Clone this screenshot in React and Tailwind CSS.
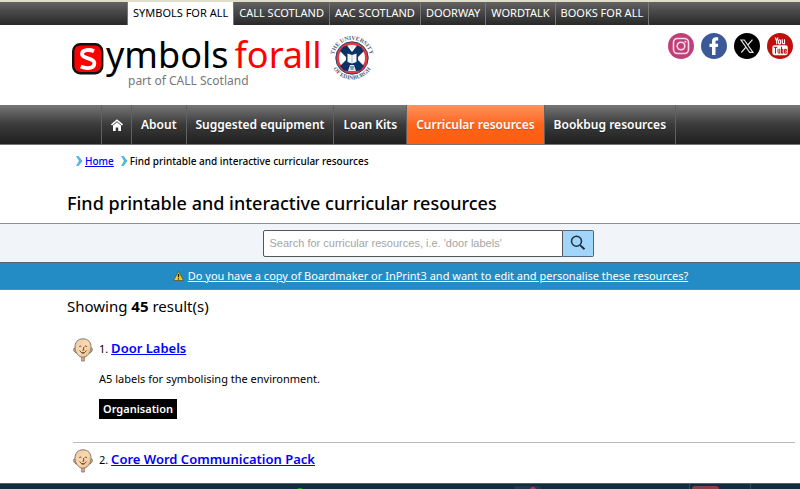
import React, { useState } from 'react';

const siteLinks = ['SYMBOLS FOR ALL', 'CALL SCOTLAND', 'AAC SCOTLAND', 'DOORWAY', 'WORDTALK', 'BOOKS FOR ALL'];

const navLinks = ['About', 'Suggested equipment', 'Loan Kits', 'Curricular resources', 'Bookbug resources'];

const results = [
    { title: 'Door Labels', text: 'A5 labels for symbolising the environment.', tag: 'Organisation' },
    { title: 'Core Word Communication Pack' },
];

const Crest = () => (
    <svg viewBox="0 0 44 46" className="w-11 h-[46px] overflow-visible" role="img" aria-label="The University of Edinburgh">
        <defs>
            <path id="ringTop" d="M4.5 28 A18.2 18.2 0 1 1 39.5 28" />
            <path id="ringBottom" d="M.5 25 A21.6 21.6 0 0 0 43.5 25" />
        </defs>
        <g fill="#4a6180" fontFamily="Liberation Serif, serif" fontSize="5.8" fontWeight="700" textAnchor="middle">
            <text>
                <textPath href="#ringTop" startOffset="50%">THE UNIVERSITY</textPath>
            </text>
            <text>
                <textPath href="#ringBottom" startOffset="50%">OF EDINBURGH</textPath>
            </text>
        </g>
        <circle cx="22" cy="23" r="16.2" fill="#e63946" stroke="#254466" strokeWidth="1" />
        <circle cx="22" cy="23" r="13" fill="#fff" />
        <path d="M13 12 L17 10.5 L22 17 L27 10.5 L31 12 L34 16 L28 22 L28 25 L34 31 L30 35.5 L26 36 L22 31 L18 36 L14 35.5 L10 31 L16 25 L16 22 L10 16 Z" fill="#0b3265" />
        <path d="M17.5 18.5 L22 20 L26.5 18.5 V27 L22 28.5 L17.5 27 Z" fill="#f3f6fa" />
        <path d="M22 20 V28" stroke="#8797ad" strokeWidth=".6" />
        <path d="M19.5 11 L22 14.5 L24.5 11 M18 36 L20 30 H24 L26 36 Z" fill="#dfe6ee" />
        <path d="M20 32 H24 M20.5 34 H23.5" stroke="#315178" strokeWidth="1" />
    </svg>
);

const Face = () => (
    <svg viewBox="0 0 20 24" className="w-5 h-6 shrink-0" aria-hidden="true">
        <defs>
            <linearGradient id="skin" x1="0" y1="0" x2="1" y2="1">
                <stop offset="0" stopColor="#e9c8a4" />
                <stop offset=".5" stopColor="#fbd8ae" />
                <stop offset="1" stopColor="#efb984" />
            </linearGradient>
        </defs>
        <path d="M8.7 18 V23 H11.3 V18" fill="#e5b98c" stroke="#81664b" strokeWidth=".8" />
        <path d="M2.6 9.5 C-.3 9.5 .3 14.6 3.8 15 M17.4 9.5 C20.3 9.5 19.7 14.6 16.2 15" fill="#eec69c" stroke="#67584a" strokeWidth=".9" />
        <path d="M10 .8 C4.8 .8 1.8 4.4 2 9.5 C2.2 14.5 5.6 19.2 10 19.2 C14.4 19.2 17.8 14.5 18 9.5 C18.2 4.4 15.2 .8 10 .8 Z" fill="url(#skin)" stroke="#75706a" strokeWidth=".9" />
        <path d="M6.2 8.6 Q7.4 7.4 8.4 8.6 M11.6 8.6 Q12.8 7.4 14 8.6 M10.7 9 V12.2 H9.3 M6.6 12.5 Q10 17.8 13.4 12.5 M8.6 14.8 H11.4" fill="none" stroke="#574231" strokeWidth=".9" />
    </svg>
);

const Chevron = () => (
    <svg viewBox="0 0 8 10" className="w-2 h-2.5" aria-hidden="true">
        <path d="M1 0 H3.5 L7.5 5 L3.5 10 H1 L4 5 Z" fill="#4db5ea" />
    </svg>
);

const Social = () => (
    <div className="flex gap-[7px]">
        <a href="#instagram" aria-label="Instagram">
            <svg viewBox="0 0 26 26" className="size-[26px]">
                <circle cx="13" cy="13" r="13" fill="#c13f79" />
                <rect x="5.5" y="5.5" width="15" height="15" rx="4" fill="none" stroke="#f7dce8" strokeWidth="1.6" />
                <circle cx="13" cy="13" r="3.8" fill="none" stroke="#f7dce8" strokeWidth="1.6" />
                <circle cx="17.4" cy="8.7" r="1" fill="#f7dce8" />
            </svg>
        </a>
        <a href="#facebook" aria-label="Facebook">
            <svg viewBox="0 0 26 26" className="size-[26px]">
                <circle cx="13" cy="13" r="13" fill="#3b5998" />
                <path d="M11 22 V14 H8.5 V10.7 H11 V8.4 C11 5.6 12.6 4.3 15 4.3 H17.2 V7.5 H15.7 C14.7 7.5 14.5 8 14.5 8.9 V10.7 H17.2 L16.8 14 H14.5 V22 Z" fill="#fff" />
            </svg>
        </a>
        <a href="#x" aria-label="X">
            <svg viewBox="0 0 26 26" className="size-[26px]">
                <circle cx="13" cy="13" r="13" fill="#000" />
                <path d="M7 7 H10.3 L19 19.3 H15.7 Z M18.5 6.7 L13.8 12 M12 14.2 L7.3 19.5" fill="none" stroke="#e4e4e4" strokeWidth="1.2" />
            </svg>
        </a>
        <a href="#youtube" aria-label="YouTube">
            <svg viewBox="0 0 26 26" className="size-[26px]">
                <circle cx="13" cy="13" r="13" fill="#c20d0d" />
                <path d="M8.3 4.5 L9.7 8 L11 4.5 M9.7 8 V11.3" fill="none" stroke="#fff" strokeWidth="1.2" />
                <rect x="11.6" y="6.7" width="2" height="4.2" rx="1" fill="none" stroke="#fff" strokeWidth="1.1" />
                <path d="M15.3 6.2 V10.2 Q15.5 11.4 17.5 10.2 M17.5 6.2 V11.3" fill="none" stroke="#fff" strokeWidth="1.1" />
                <rect x="5.3" y="12.2" width="15.5" height="10" rx="2.4" fill="#fff" />
                <path d="M6.8 14.3 H10.3 M8.5 14.3 V20.6 M11 15.8 V19.6 Q11.3 20.6 12.8 19.6 M12.8 15.8 V20.6 M14.5 13.8 V20.3 H15.8 V16.4 H14.5 M19.3 19 V20.2 H17.6 V16.3 H19.3 V18.2 H17.6" fill="none" stroke="#c20d0d" strokeWidth="1" />
            </svg>
        </a>
    </div>
);

const App = () => {
    const [query, setQuery] = useState('');

    return (
        <div className="h-screen flex flex-col overflow-hidden bg-white text-black font-['Noto_Sans',sans-serif]">
            <nav aria-label="Sites" className="shrink-0 h-[25px] pl-[127px] border-t-2 border-[#deddcc] bg-linear-to-b from-[#626262] to-[#292929] flex">
                {siteLinks.map((name, i) => (
                    <a
                        key={name}
                        href="#site"
                        className={
                            i === 0
                                ? 'px-[5px] flex items-center text-[11px] whitespace-nowrap bg-white text-black border-x border-[#777]'
                                : 'px-[5px] flex items-center text-[11px] whitespace-nowrap text-white border-r border-[#777]'
                        }
                    >
                        {name}
                    </a>
                ))}
            </nav>

            <header className="shrink-0 h-20 pl-[72px] pr-[7px] flex justify-between items-start">
                <div className="flex gap-2 pt-2.5">
                    <a href="#home" className="block pt-1">
                        <span className="flex items-end h-9">
                            <svg viewBox="0 0 32 32" className="size-8 mr-0.5" role="img" aria-label="S">
                                <rect x="1.2" y="1.2" width="29" height="29" rx="7" fill="#f00" stroke="#111" strokeWidth="2.4" />
                                <path d="M22 8.2 C18 6.3 10 6.4 10 11 C10 16.4 22.4 14.3 22.4 20 C22.4 26 14 26 8.8 23.6" fill="none" stroke="#fff" strokeWidth="3.8" />
                            </svg>
                            <span className="text-4xl leading-10">ymbols</span>
                            <span className="text-4xl leading-10 text-[#f00] ml-1.5">forall</span>
                        </span>
                        <span className="block pl-14 text-xs leading-3 text-[#777]">part of CALL Scotland</span>
                    </a>
                    <Crest />
                </div>
                <div className="pt-2">
                    <Social />
                </div>
            </header>

            <nav aria-label="Main" className="shrink-0 h-10 pl-[101px] bg-linear-to-b from-[#777] via-[#3b3b3b] to-[#202020] border-b border-[#777] flex">
                <a href="#home" aria-label="Home" className="w-[31px] flex items-center justify-center border-x border-[#606060]">
                    <svg viewBox="0 0 12 12" className="size-3">
                        <path d="M.5 6 L6 1.2 L11.5 6" fill="none" stroke="#fff" strokeWidth="1.6" />
                        <path d="M2 6.5 L6 3.2 L10 6.5 V12 H7.3 V8.5 H4.7 V12 H2 Z" fill="#fff" />
                    </svg>
                </a>
                {navLinks.map((name) => (
                    <a
                        key={name}
                        href="#section"
                        className={
                            name === 'Curricular resources'
                                ? 'px-[9px] flex items-center text-xs font-semibold whitespace-nowrap text-white text-shadow-xs border-r border-[#606060] bg-linear-to-b from-[#ff925c] via-[#ff6519] to-[#fc5b10]'
                                : 'px-[9px] flex items-center text-xs font-semibold whitespace-nowrap text-white text-shadow-xs border-r border-[#606060]'
                        }
                    >
                        {name}
                    </a>
                ))}
            </nav>

            <main className="flex-1 min-h-0 overflow-hidden">
                <div className="pl-[75px] pt-2 flex items-center gap-0.5 text-[10px] leading-4 font-medium">
                    <Chevron />
                    <a href="#home" className="text-[#00f] underline mr-1">Home</a>
                    <Chevron />
                    <span>Find printable and interactive curricular resources</span>
                </div>
                <h1 className="pl-[67px] pt-5 pb-1.5 text-lg leading-7 font-medium">
                    Find printable and interactive curricular resources
                </h1>

                <form
                    className="h-10 pl-14 border-t border-b border-t-[#8d9296] border-b-[#59666e] bg-[#f1f5f9] flex items-center justify-center"
                    onSubmit={(e) => e.preventDefault()}
                >
                    <input
                        type="search"
                        aria-label="Search for curricular resources"
                        value={query}
                        onChange={(e) => setQuery(e.target.value)}
                        placeholder="Search for curricular resources, i.e. 'door labels'"
                        className="w-[300px] h-[27px] px-1.5 bg-white border border-[#555] rounded-l-xs text-[11px] font-['Liberation_Sans',sans-serif] placeholder:text-[#a5a5a5]"
                    />
                    <button type="submit" aria-label="Search" className="w-[31px] h-[27px] border border-l-0 border-[#526878] rounded-r-xs bg-[#a1d5f9] flex items-center justify-center">
                        <svg viewBox="0 0 16 16" className="size-4">
                            <circle cx="6.5" cy="6.3" r="5" fill="none" stroke="#20303d" strokeWidth="1.5" />
                            <path d="M10 10 L11.2 11.2" stroke="#20303d" strokeWidth="1.3" />
                            <path d="M11 11 L14.5 14.3" stroke="#20303d" strokeWidth="2" />
                        </svg>
                    </button>
                </form>

                <div className="h-[27px] pl-[61px] border-b border-[#69899c] bg-[#238cc5] flex items-center justify-center gap-1 text-[11px] text-white">
                    <svg viewBox="0 0 11 10" className="w-[11px] h-2.5" aria-hidden="true">
                        <path d="M5.5 .5 L10.5 9.5 H.5 Z" fill="#f4cd25" stroke="#514a28" strokeWidth=".7" />
                        <path d="M5.5 3 V6.3 M5.5 7.2 V8.5" stroke="#1f1c0c" strokeWidth="1.3" />
                    </svg>
                    <a href="#edit" className="underline">Do you have a copy of Boardmaker or InPrint3 and want to edit and personalise these resources?</a>
                </div>

                <p className="pl-[67px] pt-1 text-[15px] leading-6">
                    Showing <strong>45</strong> result(s)
                </p>

                <ol className="pl-[73px] pr-[5px] pt-3.5">
                    {results.map((item, i) => (
                        <li key={item.title} className="pt-1.5 pb-[23px] flex gap-1.5 text-[11px] border-b border-[#bbb] last:border-b-0">
                            <Face />
                            <div>
                                <div className="leading-5">
                                    {i + 1}. <a href="#resource" className="text-[13px] font-semibold text-[#00f] underline">{item.title}</a>
                                </div>
                                {item.text && <p className="pt-2.5 leading-5">{item.text}</p>}
                                {item.tag && <span className="inline-block mt-2.5 px-1 bg-black text-white font-semibold leading-5">{item.tag}</span>}
                            </div>
                        </li>
                    ))}
                </ol>
            </main>

            <footer className="shrink-0 h-1.5 border-t border-[#53636d] bg-[#122b3d] overflow-hidden" aria-hidden="true">
                <svg className="w-full h-1.5" viewBox="0 0 800 6" preserveAspectRatio="none">
                    <circle cx="300" cy="9" r="5" fill="#12a010" />
                    <rect x="514" y="2" width="27" height="8" rx="2" fill="#24374a" />
                    <circle cx="533" cy="6" r="3" fill="#a63f70" />
                    <path d="M689.5 0 V6 M750.5 0 V6" stroke="#34495a" />
                    <rect x="692" y="2" width="27" height="8" rx="3" fill="#893f46" />
                </svg>
            </footer>
        </div>
    );
};

export default App;
